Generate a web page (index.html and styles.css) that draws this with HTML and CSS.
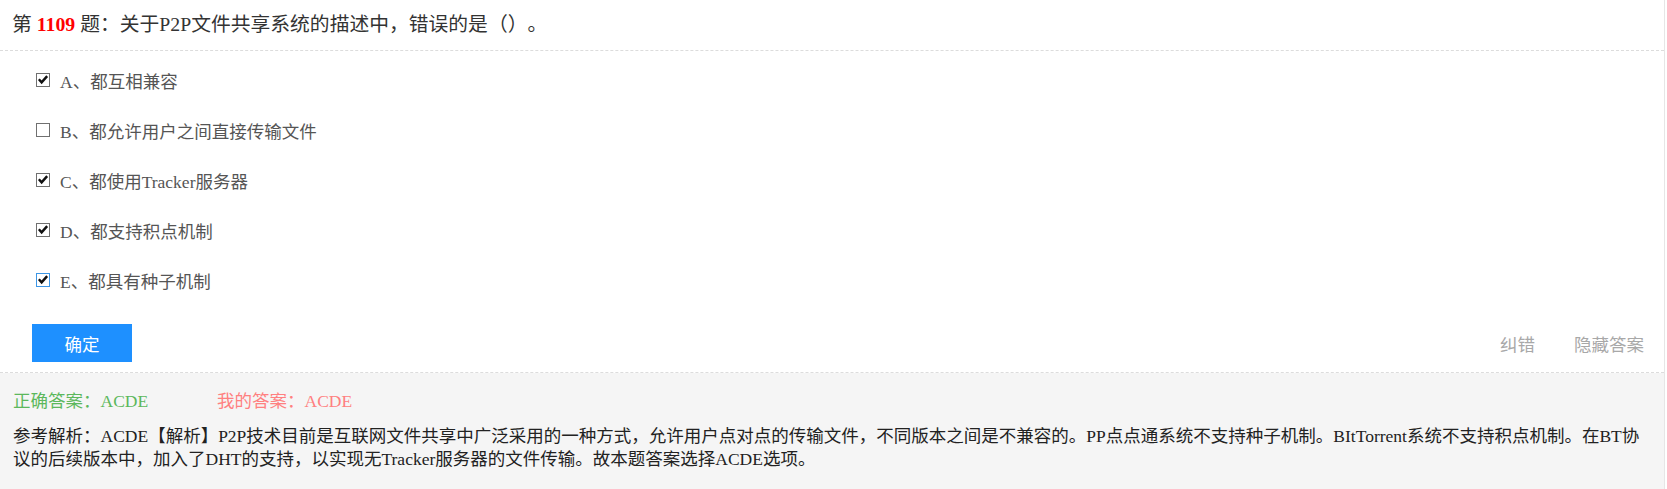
FILE: index.html
```html
<!DOCTYPE html>
<html lang="zh-CN">
<head>
<meta charset="utf-8">
<title>第1109题</title>
<link rel="stylesheet" href="styles.css">
</head>
<body>
<div class="page">
  <div class="title">第 <b class="num">1109</b> 题：关于P2P文件共享系统的描述中，错误的是（）。</div>
  <div class="body">
    <ul class="options">
      <li class="opt"><span class="box"><svg viewBox="0 0 13 13" width="13" height="13"><path d="M2 6.3 L5 9.6 L11 2.8" fill="none" stroke="#111" stroke-width="2.6"/></svg></span><span class="label">A、都互相兼容</span></li>
      <li class="opt"><span class="box"></span><span class="label">B、都允许用户之间直接传输文件</span></li>
      <li class="opt"><span class="box"><svg viewBox="0 0 13 13" width="13" height="13"><path d="M2 6.3 L5 9.6 L11 2.8" fill="none" stroke="#111" stroke-width="2.6"/></svg></span><span class="label">C、都使用Tracker服务器</span></li>
      <li class="opt"><span class="box"><svg viewBox="0 0 13 13" width="13" height="13"><path d="M2 6.3 L5 9.6 L11 2.8" fill="none" stroke="#111" stroke-width="2.6"/></svg></span><span class="label">D、都支持积点机制</span></li>
      <li class="opt"><span class="box box-focus"><svg viewBox="0 0 13 13" width="13" height="13"><path d="M2 6.3 L5 9.6 L11 2.8" fill="none" stroke="#111" stroke-width="2.6"/></svg></span><span class="label">E、都具有种子机制</span></li>
    </ul>
    <div class="actions">
      <button class="btn" type="button">确定</button>
      <div class="links">
        <span class="link">纠错</span>
        <span class="link">隐藏答案</span>
      </div>
    </div>
  </div>
  <div class="answer">
    <div class="result">
      <span class="right">正确答案：ACDE</span>
      <span class="mine">我的答案：ACDE</span>
    </div>
    <p class="analysis">参考解析：ACDE【解析】P2P技术目前是互联网文件共享中广泛采用的一种方式，允许用户点对点的传输文件，不同版本之间是不兼容的。PP点点通系统不支持种子机制。BItTorrent系统不支持积点机制。在BT协议的后续版本中，加入了DHT的支持，以实现无Tracker服务器的文件传输。故本题答案选择ACDE选项。</p>
  </div>
</div>
</body>
</html>
```

FILE: styles.css
```css
* { box-sizing: border-box; }
html, body { margin: 0; padding: 0; background: #fff; }
body {
  font-family: "Liberation Serif", "Noto Sans CJK SC", serif;
  color: #333;
  text-spacing-trim: space-all;
}
.page {
  width: 1665px;
  height: 489px;
  border-right: 1px solid #e6e6e6;
  display: flex;
  flex-direction: column;
}
.title {
  height: 51px;
  line-height: 48px;
  padding-left: 12px;
  font-size: 19.8px;
  color: #333;
  border-bottom: 1px dashed #dcdcdc;
  white-space: nowrap;
}
.num { color: #f00; font-weight: bold; }
.body {
  padding: 4px 0 10px 0;
  border-bottom: 1px dashed #dcdcdc;
}
.options { list-style: none; margin: 0; padding: 0 0 0 36px; }
.opt {
  height: 50px;
  display: flex;
  align-items: center;
  font-size: 17.5px;
  color: #555;
}
.box {
  width: 14px;
  height: 14px;
  border: 1px solid #707070;
  background: #fff;
  display: flex;
  align-items: center;
  justify-content: center;
  margin-right: 10px;
  margin-top: -1px;
}
.box svg { display: block; }
.box-focus { border-color: #3c96e6; }
.actions {
  margin-top: 19px;
  height: 38px;
  padding-left: 32px;
  display: flex;
  align-items: center;
  justify-content: space-between;
}
.btn {
  width: 100px;
  height: 38px;
  border: 0;
  background: #1e90ff;
  color: #fff;
  font-family: "Noto Sans CJK SC", sans-serif;
  font-size: 17.5px;
  padding: 0;
}
.links {
  display: flex;
  gap: 39px;
  padding-right: 20px;
}
.link {
  font-family: "Noto Sans CJK SC", sans-serif;
  font-size: 17.5px;
  color: #a8a8a8;
}
.answer {
  flex: 1;
  background: #f5f5f5;
  padding: 17px 19px 0 13px;
  font-size: 17.5px;
}
.result { height: 23px; line-height: 23px; display: flex; }
.right { color: #5cb85c; width: 204px; }
.mine { color: #ff8080; }
.analysis {
  margin: 12px 0 0 0;
  font-size: 17.5px;
  line-height: 23px;
  color: #222;
}
```
